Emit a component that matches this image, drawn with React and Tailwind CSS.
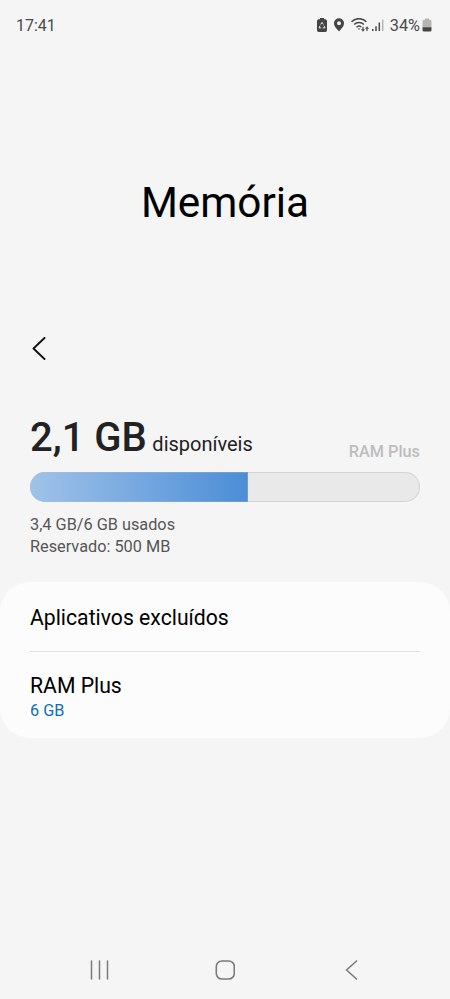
const ROWS = [
  { title: 'Aplicativos excluídos' },
  { title: 'RAM Plus', value: '6 GB' },
];

const USED_PERCENT = 56;

export default function App() {
  return (
    <div className="flex h-[999px] w-[450px] flex-col overflow-hidden bg-[#f5f5f5] font-[Roboto,sans-serif] text-black">
      <StatusBar />

      <header className="flex h-[269px] items-center justify-center pt-9">
        <h1 className="text-[42.3px] leading-[51px]">Memória</h1>
      </header>

      <main className="flex flex-1 flex-col">
        <button className="mb-[38px] h-[60px] w-[60px] pl-8" aria-label="Voltar">
          <BackIcon />
        </button>
        <MemoryUsage />
        <section className="h-[156px] rounded-[30px] bg-[#fcfcfc] px-[30px]">
          <SettingRow row={ROWS[0]} />
          <hr className="border-[#e2e2e2]" />
          <SettingRow row={ROWS[1]} />
        </section>
      </main>

      <NavBar />
    </div>
  );
}

function StatusBar() {
  return (
    <div className="flex h-[50px] items-center justify-between pt-px pr-[18px] pl-4 text-[16px] leading-5 text-[#4a4a4a]">
      <span>17:41</span>
      <div className="flex items-center">
        <div className="flex items-center pb-[2px]">
          {/* Battery saver */}
          <svg className="mr-1.5" width="10" height="14" viewBox="0 0 10 14">
            <path d="M3 0h4v1.300h1.300A1.700 1.700 0 0 1 10 3v9.300A1.700 1.700 0 0 1 8.300 14H1.700A1.700 1.700 0 0 1 0 12.300V3a1.700 1.700 0 0 1 1.700-1.700H3z" fill="#444" />
            <path d="M3.700 6.500 5 4.400l1.300 2.100M7 7.700l1 2.200H5.800M3 7.700 2 9.900h2.200" fill="none" stroke="#f5f5f5" strokeWidth=".9" />
          </svg>
          {/* Location */}
          <svg className="mr-[6px]" width="12" height="14" viewBox="0 0 12 14">
            <path d="M6 .3a5 5 0 0 0-5 5C1 8.700 4.200 11.300 6 13.500c1.800-2.200 5-4.800 5-8.200a5 5 0 0 0-5-5zm0 3a2 2 0 1 1 0 4 2 2 0 0 1 0-4z" fill="#444" fillRule="evenodd" />
          </svg>
          {/* Wi-Fi */}
          <svg className="mr-[3px]" width="18" height="14" viewBox="0 0 18 14">
            <g fill="none" stroke="#4a4a4a" strokeWidth="1.500">
              <path d="M.6 3.800a10.300 10.300 0 0 1 14.800 0M3.100 6.600a6.800 6.800 0 0 1 9.800 0M5.500 9.200a3.500 3.500 0 0 1 4.800-.2" />
              <path d="M12 8.800v3M16 13v-2.500" strokeWidth="1.200" />
            </g>
            <path d="M6.700 10.500h2.600L8 12zM10 11.200h4L12 13.700zM14 10.800h4L16 8.200z" fill="#4a4a4a" />
          </svg>
          {/* Signal */}
          <svg className="mr-[6px]" width="12" height="14" viewBox="0 0 12 14">
            <path d="M.8 13v-2M4 13V8.300M7.300 13V4.500" stroke="#4a4a4a" strokeWidth="1.500" />
            <path d="M10.700 13V1.500" stroke="#b5b5b5" strokeWidth="1.500" />
          </svg>
        </div>
        <span className="text-[16.3px]">34%</span>
        <svg className="mb-[2px] ml-[2px]" width="10" height="14" viewBox="0 0 10 14">
          <path d="M3 .5h4v1.300h1A1.500 1.500 0 0 1 9.500 3.300V9.500h-9V3.300A1.500 1.500 0 0 1 2 1.800h1z" fill="#b5b5b5" />
          <path d="M.5 9.300h9v2.700a1.500 1.500 0 0 1-1.500 1.500H2A1.500 1.500 0 0 1 .5 12z" fill="#444" />
        </svg>
      </div>
    </div>
  );
}

function BackIcon() {
  return (
    <svg width="14" height="24" viewBox="0 0 14 24" fill="none" stroke="#111" strokeWidth="1.900" strokeLinecap="round" strokeLinejoin="round">
      <path d="M12.500 1 1.500 11.500l11 10.500" />
    </svg>
  );
}

function MemoryUsage() {
  return (
    <section className="flex h-[165px] flex-col px-[30px]">
      <div className="flex h-[55px] items-end justify-between text-[#222]">
        <p className="flex items-baseline gap-[5.5px] pb-[11px]">
          <span className="text-[40px] leading-[46px] font-medium">2,1 GB</span>
          <span className="text-[20px] leading-6">disponíveis</span>
        </p>
        <span className="pb-[10px] text-[16.3px] leading-5 font-medium text-[#bdbdbd]">RAM Plus</span>
      </div>
      <div className="h-[30px] shrink-0 overflow-hidden rounded-full bg-[#e9e9e9] inset-ring inset-ring-[#d4d4d4]">
        <div
          className="h-full bg-linear-to-r from-[#a0c2e8] to-[#4b8dd6] inset-ring inset-ring-[#b4bfcc]/30"
          style={{ width: `${USED_PERCENT}%` }}
        />
      </div>
      <div className="pt-3 text-[16.3px] leading-[22px] text-[#555]">
        <p>3,4 GB/6 GB usados</p>
        <p>Reservado: 500 MB</p>
      </div>
    </section>
  );
}

function SettingRow({ row }) {
  return (
    <div className={row.value ? 'pt-[21px]' : 'flex h-[69px] items-center pt-[2px]'}>
      <p className="text-[21.2px] leading-[26px]">{row.title}</p>
      {row.value && <p className="text-[16.3px] leading-6 text-[#0a6ebd]">{row.value}</p>}
    </div>
  );
}

function NavBar() {
  return (
    <nav className="flex h-[60px] items-center pt-px pl-[89px] text-[#7b7b7b]">
      <svg width="20" height="20" viewBox="0 0 20 20" stroke="currentColor" strokeWidth="1.500" strokeLinecap="round">
        <path d="M2.500 1v18M10.500 1v18M18.500 1v18" />
      </svg>
      <svg className="ml-[106px]" width="20" height="20" viewBox="0 0 20 20" fill="none" stroke="currentColor" strokeWidth="1.600">
        <rect x="1.300" y="1" width="18" height="18" rx="5.500" />
      </svg>
      <svg className="ml-[110px]" width="14" height="20" viewBox="0 0 14 20" fill="none" stroke="currentColor" strokeWidth="1.600" strokeLinecap="round" strokeLinejoin="round">
        <path d="M11.500 1 1.500 10l10 9" />
      </svg>
    </nav>
  );
}
